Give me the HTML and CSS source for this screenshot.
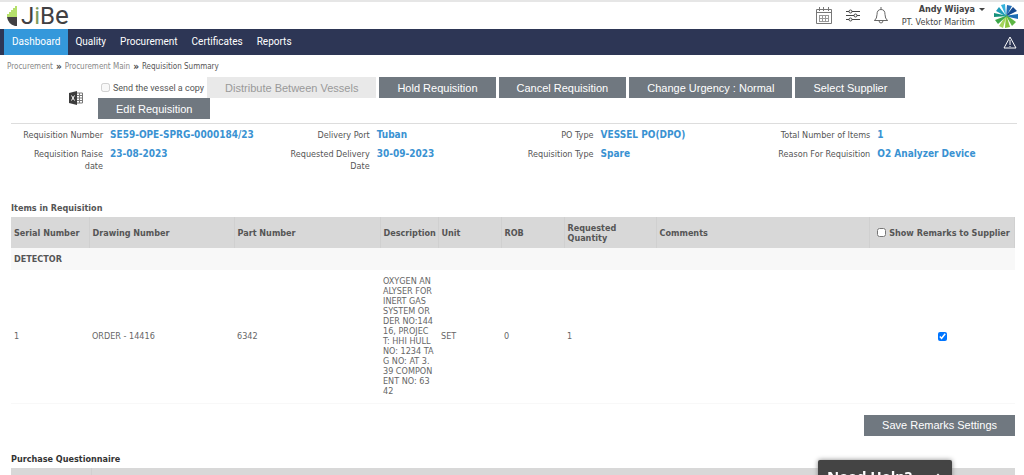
FILE: index.html
```html
<!DOCTYPE html>
<html lang="en">
<head>
<meta charset="utf-8">
<meta name="viewport" content="width=device-width, initial-scale=1">
<title>Requisition Summary</title>
<link rel="stylesheet" href="styles.css">
</head>
<body>
<header class="topbar">
  <a class="brand" href="#">
    <svg class="brand-mark" width="10" height="20" viewBox="0 0 10 20" aria-hidden="true">
      <path d="M10 0H8v2H6v2H4v2H2v2H0v3h10z" fill="#b5e06c"/>
      <path d="M0 11h10v9H8Q1 18 0 11z" fill="#414042"/>
    </svg>
    <span class="brand-name">J<span class="brand-i">i</span>B<span class="brand-e">e</span></span>
  </a>
  <div class="tools">
    <button class="tool" type="button" aria-label="Calendar">
      <svg width="16" height="17" viewBox="0 0 16 17" fill="none" stroke="#777">
        <path d="M.5 2.5h15v14H.5zM.5 5.5h15M3.500 0v4M7.500 0v4M12.500 0v4"/>
        <path d="M3 8.500h10M3 11.500h10M3 14.500h10M3.500 8v7M6.500 8v7M9.500 8v7M12.500 8v7" stroke="#999"/>
      </svg>
    </button>
    <button class="tool" type="button" aria-label="Settings">
      <svg width="14" height="13" viewBox="0 0 14 13" fill="#fff" stroke="#444">
        <path d="M0 2.500h14M0 6.500h14M0 10.500h14"/>
        <circle cx="4.500" cy="2.500" r="1.500"/><circle cx="9.500" cy="6.500" r="1.500"/><circle cx="4.500" cy="10.500" r="1.500"/>
      </svg>
    </button>
    <button class="tool" type="button" aria-label="Notifications">
      <svg width="14" height="17" viewBox="0 0 14 17" fill="none" stroke="#666">
        <path d="M7 0v2M.5 13.500q2.500-2 2.500-6Q3 2.500 7 2.500t4 5q0 4 2.500 6zM5 13.500q0 2.500 2 2.500t2-2.500M.5 13.500h13"/>
      </svg>
    </button>
    <div class="user">
      <button class="user-name" type="button">Andy Wijaya
        <svg width="6" height="3" viewBox="0 0 6 3" aria-hidden="true"><path d="M0 0h6L3 3z" fill="#444"/></svg>
      </button>
      <span class="user-company">PT. Vektor Maritim</span>
    </div>
    <svg class="company-logo" width="24" height="24" viewBox="0 0 24 24" aria-hidden="true">
      <path d="M12 12L7 1l4-1z" fill="#35b3dc"/>
      <path d="M12 13l1-12 5 1z" fill="#2470b8"/>
      <path d="M11 13l8-10 4 4z" fill="#164a90"/>
      <path d="M10 12l14-2v5z" fill="#1c6db4"/>
      <path d="M11 10l11 8-4 4z" fill="#5cb544"/>
      <path d="M12 10l4 13-5 1z" fill="#8cc63f"/>
      <path d="M13 10L9 24l-4-2z" fill="#a4d45c"/>
      <path d="M14 11L4 20l-3-4z" fill="#3ba648"/>
      <path d="M14 12L0 13V9z" fill="#15917c"/>
      <path d="M13 13L2 7l3-4z" fill="#1f9db8"/>
    </svg>
  </div>
</header>
<nav class="nav">
  <a class="nav-link nav-link-active" href="#">Dashboard</a>
  <a class="nav-link" href="#">Quality</a>
  <a class="nav-link" href="#">Procurement</a>
  <a class="nav-link" href="#">Certificates</a>
  <a class="nav-link" href="#">Reports</a>
  <button class="nav-alert" type="button" aria-label="Alerts">
    <svg width="14" height="13" viewBox="0 0 14 13" fill="none" stroke="#fff"><path d="M7 1l6 11H1zM7 4v5M7 10v1"/></svg>
  </button>
</nav>
<main class="page">
  <div class="crumbs">
    <a class="crumb" href="#">Procurement</a><b class="crumb-sep">»</b><a class="crumb" href="#">Procurement Main</a><b class="crumb-sep">»</b><span class="crumb-current">Requisition Summary</span>
  </div>
  <section class="actions">
    <button class="excel" type="button" aria-label="Export to Excel">
      <svg width="14" height="14" viewBox="0 0 14 14">
        <path d="M8 2h5.500v10H8M8 4.500h5M8 7h5M8 9.500h5M10.500 2v10" stroke="#777" fill="none"/>
        <path d="M0 2l8-2v14l-8-2z" fill="#3c3c3c"/>
        <path d="M2.500 4.500l3 5M5.500 4.500l-3 5" stroke="#fff" fill="none"/>
      </svg>
    </button>
    <div class="action-list">
      <label class="copy"><input class="check" type="checkbox" disabled>Send the vessel a copy</label>
      <button class="btn btn-off" type="button" disabled>Distribute Between Vessels</button>
      <button class="btn" type="button">Hold Requisition</button>
      <button class="btn" type="button">Cancel Requisition</button>
      <button class="btn" type="button">Change Urgency : Normal</button>
      <button class="btn" type="button">Select Supplier</button>
      <div class="action-break"></div>
      <button class="btn" type="button">Edit Requisition</button>
    </div>
  </section>
  <dl class="info">
    <dt>Requisition Number</dt><dd>SE59-OPE-SPRG-0000184/23</dd>
    <dt>Delivery Port</dt><dd>Tuban</dd>
    <dt>PO Type</dt><dd>VESSEL PO(DPO)</dd>
    <dt>Total Number of Items</dt><dd>1</dd>
    <dt>Requisition Raise<br>date</dt><dd>23-08-2023</dd>
    <dt>Requested Delivery<br>Date</dt><dd>30-09-2023</dd>
    <dt>Requisition Type</dt><dd>Spare</dd>
    <dt>Reason For Requisition</dt><dd>O2 Analyzer Device</dd>
  </dl>
  <section class="block">
    <h2 class="title">Items in Requisition</h2>
    <table class="items">
      <colgroup>
        <col class="c-serial"><col class="c-drawing"><col class="c-part"><col class="c-desc"><col class="c-unit"><col class="c-rob"><col class="c-qty"><col><col class="c-show">
      </colgroup>
      <thead>
        <tr>
          <th>Serial Number</th><th>Drawing Number</th><th>Part Number</th><th>Description</th><th>Unit</th><th>ROB</th><th>Requested Quantity</th><th>Comments</th>
          <th class="center"><label class="show"><input class="check" type="checkbox">Show Remarks to Supplier</label></th>
        </tr>
      </thead>
      <tbody>
        <tr class="group"><th colspan="9">DETECTOR</th></tr>
        <tr class="item">
          <td>1</td><td>ORDER - 14416</td><td>6342</td>
          <td>OXYGEN AN<br>ALYSER FOR<br>INERT GAS<br>SYSTEM OR<br>DER NO:144<br>16, PROJEC<br>T: HHI HULL<br>NO: 1234 TA<br>G NO: AT 3.<br>39 COMPON<br>ENT NO: 63<br>42</td>
          <td>SET</td><td>0</td><td>1</td><td></td>
          <td class="center"><input class="check" type="checkbox" checked aria-label="Show remarks for item 1"></td>
        </tr>
      </tbody>
    </table>
    <div class="save-row"><button class="btn" type="button">Save Remarks Settings</button></div>
  </section>
  <section class="block">
    <h2 class="title title-dark">Purchase Questionnaire</h2>
    <div class="question-head"><span class="question-cell"></span></div>
  </section>
</main>
<button class="help" type="button">Need Help?
  <svg width="10" height="10" viewBox="0 0 10 10" aria-hidden="true"><path d="M1 8l4-4 4 4" fill="none" stroke="#fff" stroke-width="2"/></svg>
</button>
</body>
</html>
```
FILE: styles.css
```css
* { box-sizing: border-box; }
html { height: 100%; overflow: hidden; }
body {
  margin: 0;
  height: 100%;
  overflow: hidden;
  background: #fff;
  color: #555;
  font: 9px/12px "DejaVu Sans Condensed", "DejaVu Sans", sans-serif;
}
button { font: inherit; color: inherit; border: 0; padding: 0; background: none; cursor: pointer; }
a { color: inherit; text-decoration: none; }
svg { display: block; }

.topbar { display: flex; align-items: center; justify-content: space-between; height: 29px; border-top: 2px solid #e6e6e6; padding: 0 6px 0 7px; }
.brand { display: flex; align-items: center; gap: 4px; }
.brand-name { font: 24px/26px Roboto, sans-serif; color: #414042; }
.brand-i { color: #7d9a5a; }
.brand-e { font-size: 26px; }
.tools { display: flex; align-items: center; gap: 14px; }
.user { display: flex; flex-direction: column; align-items: flex-end; color: #444; }
.user-name { display: flex; align-items: center; gap: 4px; font-weight: bold; line-height: 13px; }
.user-company { padding-right: 10px; line-height: 13px; }
.company-logo { margin-left: -5px; }

.nav { display: flex; align-items: stretch; height: 26px; padding: 0 7px 0 4px; background: #2d3655; color: #fff; font: 10px/26px Roboto, sans-serif; }
.nav-link { padding: 0 7px; }
.nav-link-active { padding: 0 8px; background: #3498db; }
.nav-alert { margin-left: auto; }

.crumbs { display: flex; padding: 6px 7px 4px; font-size: 8px; line-height: 12px; color: #888; }
.crumb-sep { padding: 0 3px; font-size: 10px; line-height: 11px; color: #444; }
.crumb-current { color: #555; }

.actions { display: flex; align-items: center; margin: 0 7px 0 11px; padding: 0 0 4px 58px; border-bottom: 1px solid #ddd; }
.excel { margin-right: 15px; }
.action-list { display: flex; flex-wrap: wrap; align-items: center; column-gap: 3px; }
.action-break { flex-basis: 100%; }
.copy { display: flex; align-items: center; font-family: Roboto, sans-serif; }
.check { width: 9px; height: 9px; margin: 3px; }
.btn { height: 21px; padding: 0 18px; background: #707880; color: #fff; font: 11px/20px "Liberation Sans", Arial, sans-serif; }
.btn-off { background: #e9e9e9; color: #999; cursor: default; }

.info { display: grid; grid-template-columns: 96px 153fr 100px 110fr 100px 153fr 110px 140fr; column-gap: 7px; margin: 5px 7px 20px; line-height: 12px; }
.info dt { text-align: right; padding-bottom: 7px; }
.info dd { margin: 0; color: #3a92d2; font-size: 10px; font-weight: bold; white-space: nowrap; }

.block { margin: 0 9px 0 11px; }
.title { margin: 0; font-size: 9px; line-height: 18px; }
.title-dark { color: #333; }
.items { width: 100%; border-collapse: collapse; table-layout: fixed; line-height: 10px; }
.items th, .items td { padding: 0 3px; text-align: left; }
.items .center { text-align: center; }
.items thead th { height: 31px; background: #d8d8d8; border-right: 1px solid #d0d0d0; }
.group th { height: 22px; background: #f8f8f8; }
.item { height: 133px; border-bottom: 1px solid #f8f8f8; color: #666; }
.c-serial { width: 78px; }
.c-drawing { width: 145px; }
.c-part { width: 146px; }
.c-desc { width: 58px; }
.c-unit { width: 63px; }
.c-rob { width: 63px; }
.c-qty { width: 92px; }
.c-show { width: 145px; }
.show { display: inline-flex; align-items: center; white-space: nowrap; }
.save-row { display: flex; justify-content: flex-end; padding: 11px 0 14px; }
.question-head { height: 31px; background: #d8d8d8; }
.question-cell { display: block; width: 81px; height: 100%; border-right: 1px solid #d0d0d0; }

.help { position: fixed; right: 72px; bottom: -20px; display: flex; align-items: center; justify-content: space-between; width: 134px; height: 35px; padding: 0 9px 4px; border-radius: 2px; background: #444; color: #fff; box-shadow: 0 0 5px #888; font: bold 15px/18px "Open Sans", sans-serif; }
```
